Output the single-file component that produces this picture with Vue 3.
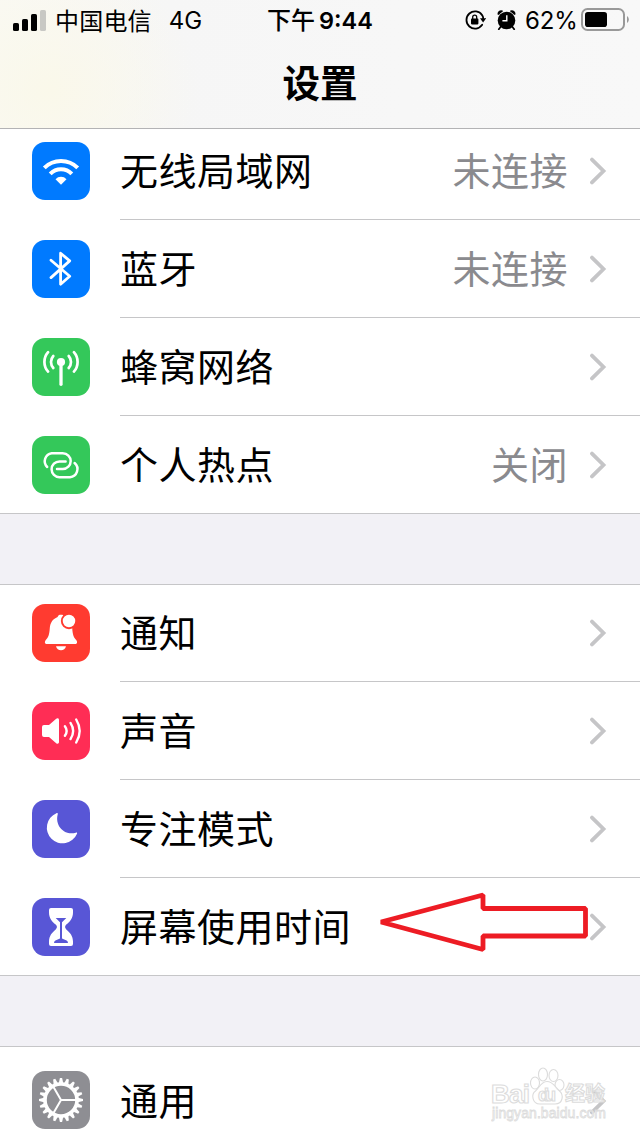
<script setup>
const groups = [
  {
    cls: 'first',
    rows: [
      { icon: 'wifi', color: '#007aff', label: '无线局域网', value: '未连接' },
      { icon: 'bluetooth', color: '#007aff', label: '蓝牙', value: '未连接' },
      { icon: 'cellular', color: '#34c85a', label: '蜂窝网络' },
      { icon: 'hotspot', color: '#34c85a', label: '个人热点', value: '关闭' },
    ],
  },
  {
    cls: 'middle',
    rows: [
      { icon: 'bell', color: '#ff3b30', label: '通知' },
      { icon: 'sound', color: '#ff2d55', label: '声音' },
      { icon: 'moon', color: '#5856d6', label: '专注模式' },
      { icon: 'hourglass', color: '#5856d6', label: '屏幕使用时间' },
    ],
  },
  {
    cls: 'last',
    rows: [{ icon: 'gear', color: '#8e8e93', label: '通用' }],
  },
]
const teeth = Array.from({ length: 20 }, (_, i) => i * 18)
</script>

<template>
  <div class="screen">
    <header class="header">
      <div class="status">
        <div class="carrier">
          <svg class="signal" width="33" height="21" viewBox="0 0 33 21">
            <rect x="0" y="13" width="6" height="8" rx="1.6" />
            <rect x="9" y="9" width="6" height="12" rx="1.6" />
            <rect x="18" y="4" width="6" height="17" rx="1.6" />
            <rect x="27" y="0" width="6" height="21" rx="1.6" fill="#c8c8c4" />
          </svg>
          <span class="operator">中国电信</span>
          <span class="net">4G</span>
        </div>
        <div class="clock"><span class="ampm">下午</span><span class="time">9:44</span></div>
        <div class="power">
          <svg class="lock" width="21" height="20" viewBox="0 0 21 20">
            <path d="M17.2 5.2A8.6 8.6 0 1 0 17.2 14.8" fill="none" stroke="#000" stroke-width="1.8" stroke-linecap="round" />
            <path d="M17.2 5.2Q18.4 7 18.2 9" fill="none" stroke="#000" stroke-width="1.8" />
            <path d="M15 8.2H21.2L18.1 12.6Z" />
            <rect x="6" y="8.6" width="7.4" height="5.8" rx="0.8" />
            <path d="M7.7 9V7.2A2 2 0 0 1 11.7 7.2V9" fill="none" stroke="#000" stroke-width="1.3" />
          </svg>
          <svg class="alarm" width="19" height="20" viewBox="0 0 19 20">
            <circle cx="9.5" cy="10.5" r="8.8" />
            <path d="M0.6 4.6A3.6 3.6 0 0 1 5.6 0.6L6 1.2L1.4 5ZM18.4 4.6A3.6 3.6 0 0 0 13.4 0.6L13 1.2L17.6 5Z" />
            <path d="M3.7 16.8L1.8 19.2M15.3 16.8L17.2 19.2" stroke="#000" stroke-width="1.8" stroke-linecap="round" />
            <path d="M9.8 5.3V10.8H5.4" fill="none" stroke="#fff" stroke-width="1.4" />
          </svg>
          <span class="percent">62%</span>
          <svg class="battery" width="48" height="24" viewBox="0 0 48 24">
            <rect x="1" y="1" width="42" height="21" rx="5.5" fill="none" stroke="#999" stroke-width="2" />
            <rect x="4" y="4" width="22" height="15" rx="2.8" />
            <path d="M46 8C48.4 9.6 48.4 13.4 46 15Z" fill="#999" />
          </svg>
        </div>
      </div>
      <h1 class="title">设置</h1>
    </header>

    <main>
      <section v-for="g in groups" :key="g.cls" class="group" :class="g.cls">
        <div v-for="r in g.rows" :key="r.label" class="row">
          <svg class="icon" width="58" height="58" viewBox="0 0 58 58" fill="none" stroke="#fff" stroke-linecap="round" stroke-linejoin="round">
            <rect width="58" height="58" rx="13" :fill="r.color" stroke="none" />
            <g v-if="r.icon === 'wifi'" stroke-linecap="butt">
              <path d="M12.3 25.8A23.6 23.6 0 0 1 45.7 25.8" stroke-width="4" />
              <path d="M18.2 31.8A15 15 0 0 1 39.8 31.8" stroke-width="4" />
              <path d="M23.5 37.2A7.6 7.6 0 0 1 34.5 37.2L29 42.8Z" fill="#fff" stroke="none" />
            </g>
            <path v-else-if="r.icon === 'bluetooth'" d="M19 20.2L37.7 36.3L28.6 44.2V13.2L37.7 20.9L19 37.6" stroke-width="2.8" />
            <g v-else-if="r.icon === 'cellular'">
              <circle cx="29" cy="24" r="4.1" fill="#fff" stroke="none" />
              <path d="M29 25V46.3" stroke-width="3.3" />
              <path d="M21.3 18A9 9 0 0 0 21.3 30M36.7 18A9 9 0 0 1 36.7 30M16.1 14.2A14.6 14.6 0 0 0 16.1 33.6M41.9 14.2A14.6 14.6 0 0 1 41.9 33.6" stroke-width="2.7" />
            </g>
            <path v-else-if="r.icon === 'hotspot'" stroke-width="2.5" d="M15.2 31A8.1 8.1 0 0 1 19.7 17.2H30.8A7.9 7.9 0 0 1 30.8 33H25M33.6 25.4H27.5A7.9 7.9 0 0 0 27.5 41.2H38A8.1 8.1 0 0 0 42.6 27" />
            <g v-else-if="r.icon === 'bell'" stroke="none" fill="#fff">
              <path d="M29 10.8C27 10.8 26.1 11.4 25.6 12.9C20.3 15 18.2 19 17.8 24C17.3 31 16.2 33.5 13.8 36C12.3 37.8 12.7 40 15 40H43C45.3 40 45.7 37.8 44.2 36C41.8 33.5 40.7 31 40.2 24C39.9 18 37 14.6 32.4 12.9C31.9 11.4 31 10.8 29 10.8Z" />
              <path d="M24 42.2H34C33.4 44.8 31.4 46.2 29 46.2S24.6 44.8 24 42.2Z" />
              <circle cx="37" cy="17" r="7.2" fill="#fff" :stroke="r.color" stroke-width="1.9" />
            </g>
            <g v-else-if="r.icon === 'sound'">
              <path d="M12 23H17L24.2 16.8C25.5 15.8 27 16.3 27 18V40C27 41.7 25.5 42.2 24.2 41.2L17 35H12Q10 35 10 33V25Q10 23 12 23Z" fill="#fff" stroke="none" />
              <path d="M32.9 24.2Q36.4 29 32.9 33.8M38.5 20.9Q43.8 29 38.5 37.1M44.2 17.5Q51.2 29 44.2 40.5" stroke-width="2.4" />
            </g>
            <path v-else-if="r.icon === 'moon'" fill="#fff" stroke="none" d="M24.4 13.2A15.7 15.7 0 1 0 45 33.8C45.4 32.9 44.8 32.3 43.8 32.7C33 36 22.6 26 25.7 14.4C26 13.2 25.4 12.8 24.4 13.2Z" />
            <g v-else-if="r.icon === 'hourglass'" stroke="none">
              <path fill="#fff" d="M19 10H39Q41 10 41 12V14.5C41 20 38 23.6 34.3 26.6Q31.8 29 34.3 31.4C38 34.4 41 38 41 43.5V46Q41 48 39 48H19Q17 48 17 46V43.5C17 38 20 34.4 23.7 31.4Q26.2 29 23.7 26.6C20 23.6 17 20 17 14.5V12Q17 10 19 10Z" />
              <path :fill="r.color" d="M23.7 20H34.3L30 24.2V40.4L34.6 42.4Q36 43.2 36 45H22Q22 43.2 23.4 42.4L28 40.4V24.2Z" />
            </g>
            <g v-else stroke-linecap="butt">
              <circle cx="29" cy="29" r="16" stroke-width="3.6" />
              <path v-for="a in teeth" :key="a" d="M46 26.8L51 27.9V30.1L46 31.2Z" fill="#fff" stroke="none" :transform="`rotate(${a} 29 29)`" />
              <path d="M29 29H44M29 29L21.5 16M29 29L21.5 42" stroke-width="2" />
            </g>
          </svg>
          <div class="content">
            <span class="label">{{ r.label }}</span>
            <span v-if="r.value" class="value">{{ r.value }}</span>
            <svg class="chevron" width="18" height="28" viewBox="0 0 18 28">
              <path d="M3 2.6L14.5 14L3 25.4" fill="none" stroke="#c5c5c7" stroke-width="3.8" stroke-linecap="round" stroke-linejoin="miter" />
            </svg>
          </div>
        </div>
      </section>
    </main>

    <svg class="arrow" width="212" height="62" viewBox="0 0 212 62">
      <path d="M3 31L105 4V17.5H207.5V45H105V58.5Z" transform="translate(0 -1)" fill="none" stroke="#ed1c24" stroke-width="4.8" stroke-linejoin="bevel" />
    </svg>

    <svg class="watermark" width="122" height="60" viewBox="0 0 122 60">
      <g fill="#fff" fill-opacity="0.8" stroke="#dcdcdc" stroke-width="1.1">
        <ellipse cx="44" cy="20" rx="4.5" ry="6" />
        <ellipse cx="52" cy="11.5" rx="4.5" ry="6.5" />
        <ellipse cx="62.5" cy="12.5" rx="4.5" ry="6" />
        <ellipse cx="68.5" cy="22" rx="4.5" ry="5.5" />
        <path d="M56 18.500C50 18.500 48 25 44.500 28C40 31 41 41 49 41H64C72 41 73 32 68.500 28C64 24 62 18.500 56 18.500Z" />
        <text x="0" y="39.500" class="wm-big" textLength="39">Bai</text>
        <text x="47" y="38" class="wm-du" textLength="18">du</text>
        <text x="74" y="38" class="wm-cn" textLength="40">经验</text>
        <text x="1" y="55" class="wm-url" textLength="114" stroke-width="0.8">jingyan.baidu.com</text>
      </g>
    </svg>
  </div>
</template>

<style>
body {
  margin: 0;
}
</style>

<style scoped>
.screen {
  position: relative;
  width: 640px;
  height: 1136px;
  overflow: hidden;
  background: #f2f1f6;
  color: #000;
  font-family: Inter, 'Noto Sans CJK SC', sans-serif;
}
.header {
  box-sizing: border-box;
  height: 129px;
  border-bottom: 1px solid #b3b3b5;
  background:
    radial-gradient(ellipse 150px 130px at 50px 90px, #faf8ea, rgba(250, 248, 234, 0)),
    linear-gradient(90deg, #faf9f4 0, #f6f6f6 170px, #f8f8f8 100%);
}
.status {
  display: grid;
  grid-template-columns: 254px 1fr 178px;
  height: 40px;
  align-items: center;
}
.carrier {
  display: flex;
  align-items: center;
  padding-left: 13px;
  font-size: 24px;
  white-space: nowrap;
}
.signal {
  margin-right: 9px;
}
.operator {
  padding-bottom: 2px;
  letter-spacing: 0.2px;
}
.net {
  margin-left: 17px;
}
.clock {
  display: flex;
  gap: 4px;
  align-items: center;
  padding-left: 13px;
  font-size: 24px;
  white-space: nowrap;
}
.ampm {
  padding-bottom: 3px;
  font-weight: 500;
}
.time {
  font-size: 23.5px;
  font-weight: 600;
}
.power {
  display: flex;
  align-items: center;
  padding-left: 3px;
  font-size: 24px;
}
.lock {
  margin-right: 11px;
}
.alarm {
  margin-right: 9px;
}
.percent {
  width: 56px;
  letter-spacing: -0.1px;
}
.battery {
  flex: none;
}
.title {
  margin: 17px 0 0;
  font-size: 37.5px;
  line-height: 54px;
  font-weight: 700;
  text-align: center;
}
.group {
  background: #fff;
  border-bottom: 1px solid #c6c6c8;
}
.group + .group {
  margin-top: 70px;
  border-top: 1px solid #c6c6c8;
}
.row {
  display: flex;
  height: 98px;
  padding-left: 32px;
}
.first .row:first-child {
  height: 91px;
}
.row:last-child {
  height: 97px;
}
.middle .row:first-child {
  height: 97px;
}
.icon {
  flex: none;
  margin: 20px 30px 0 0;
}
.first .row:first-child .icon {
  margin-top: 13px;
}
.middle .row:first-child .icon {
  margin-top: 19px;
}
.last .row .icon {
  margin-top: 24px;
}
.content {
  flex: 1;
  display: flex;
  align-items: center;
  box-sizing: border-box;
  padding-right: 33px;
  border-bottom: 1px solid #c6c6c8;
  font-size: 38px;
  letter-spacing: 0.5px;
}
.row:last-child .content {
  border-bottom: 0;
}
.first .row:first-child .content {
  padding-bottom: 6px;
}
.last .row .content {
  padding-top: 10px;
}
.label {
  flex: 1;
  padding-bottom: 5px;
}
.value {
  margin-right: 21px;
  padding-bottom: 5px;
  color: #8a8a8e;
}
.chevron {
  flex: none;
}
.arrow {
  position: absolute;
  left: 378px;
  top: 892px;
}
.watermark {
  position: absolute;
  left: 491px;
  top: 1063px;
  font-family: 'Liberation Sans', 'Noto Sans CJK SC', sans-serif;
}
.wm-big {
  font-size: 26px;
  font-weight: 700;
}
.wm-du {
  font-size: 18px;
  font-weight: 700;
}
.wm-cn {
  font-size: 20px;
  font-weight: 700;
}
.wm-url {
  font-size: 14px;
}
</style>
